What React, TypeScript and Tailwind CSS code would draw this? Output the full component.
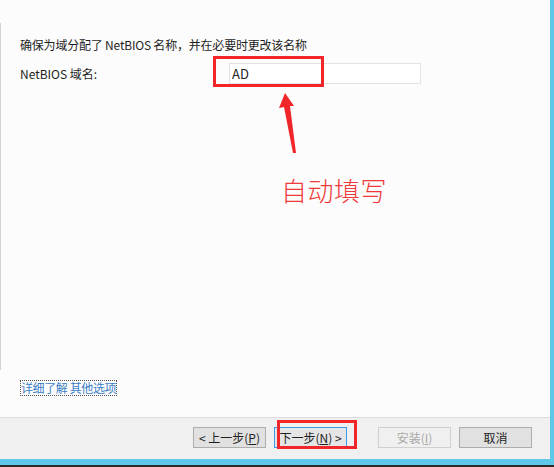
import React from "react";

const font = { fontFamily: '"Noto Sans CJK SC", "Noto Sans", sans-serif' };

function Btn({ label, variant }: { label: React.ReactNode; variant?: "focus" | "disabled" }) {
  const base = "w-[73px] h-[21px] flex items-center justify-center text-[12px] leading-none border";
  if (variant === "focus")
    return <div className={`${base} border-[#3c9be8] bg-[#e5e5e5] text-[#1e1e1e]`}>{label}</div>;
  if (variant === "disabled")
    return <div className={`${base} border-[#d0d0d0] bg-[#f0f0f0] text-[#a8a8a8]`}>{label}</div>;
  return <div className={`${base} border-[#adadad] bg-[#e1e1e1] text-[#1e1e1e]`}>{label}</div>;
}

export default function App() {
  return (
    <div className="w-[554px] h-[467px] flex flex-col overflow-hidden" style={font}>
      <div className="flex flex-1 min-h-0">
        <div className="w-[550px] flex flex-col">
          {/* content */}
          <div className="relative flex-1 bg-[#fcfcfc] flex">
            <div className="w-px mt-[23px] h-[347px] bg-[#d4d4d4]" />
            <div className="flex-1 pl-[19px] flex flex-col text-[12px] text-[#1e1e1e]">
              <div className="mt-[37px] h-[16px] leading-[16px] tracking-[-0.2px]">
                确保为域分配了 NetBIOS 名称，并在必要时更改该名称
              </div>
              <div className="mt-[10px] flex items-center h-[21px]">
                <div className="w-[209px]">NetBIOS 域名:</div>
                <div className="w-[192px] h-[21px] border border-[#e3e3e3] bg-white flex items-center pl-[2px] text-[13px]">
                  AD
                </div>
              </div>
              <div className="mt-auto mb-[20px]">
                <span className="inline-block border border-dotted border-[#555] leading-[14px] text-[12px] tracking-[-0.4px] text-[#3a80c8]">
                  详细了解 其他选项
                </span>
              </div>
            </div>

            {/* annotation overlays */}
            <div className="absolute left-[213px] top-[56px] w-[111px] h-[31px] border-[3px] border-[#f0262b]" />
            <svg className="absolute left-0 top-0" width="550" height="417">
              <polygon
                points="285,93 294,106 290,106 296,153 293,153 284,107 279,108"
                fill="#f0262b"
              />
            </svg>
            <div className="absolute left-[281px] top-[172px] text-[26px] leading-[36px] font-light tracking-[0.5px] text-[#f03a3a]">
              自动填写
            </div>
          </div>
          {/* footer */}
          <div className="h-[42px] border-t border-[#dcdcdc] bg-[#f0f0f0] relative">
            <div className="flex items-center pt-[9px] pl-[193px]">
              <Btn label={<span>&lt; 上一步(<u>P</u>)</span>} />
              <div className="ml-[8px]">
                <Btn variant="focus" label={<span>下一步(<u>N</u>) &gt;</span>} />
              </div>
              <div className="ml-[31px]">
                <Btn variant="disabled" label={<span>安装(<u>I</u>)</span>} />
              </div>
              <div className="ml-[8px]">
                <Btn label="取消" />
              </div>
            </div>
            <div className="absolute left-[277px] top-[2px] w-[80px] h-[29px] border-[3px] border-[#f0262b]" />
          </div>
        </div>
        <div className="w-[4px] bg-[#5ec8ea]" />
      </div>
      <div className="h-[6px] bg-[#5ec8ea]" />
      <div className="h-[2px] bg-[#2b2b2b]" />
    </div>
  );
}
